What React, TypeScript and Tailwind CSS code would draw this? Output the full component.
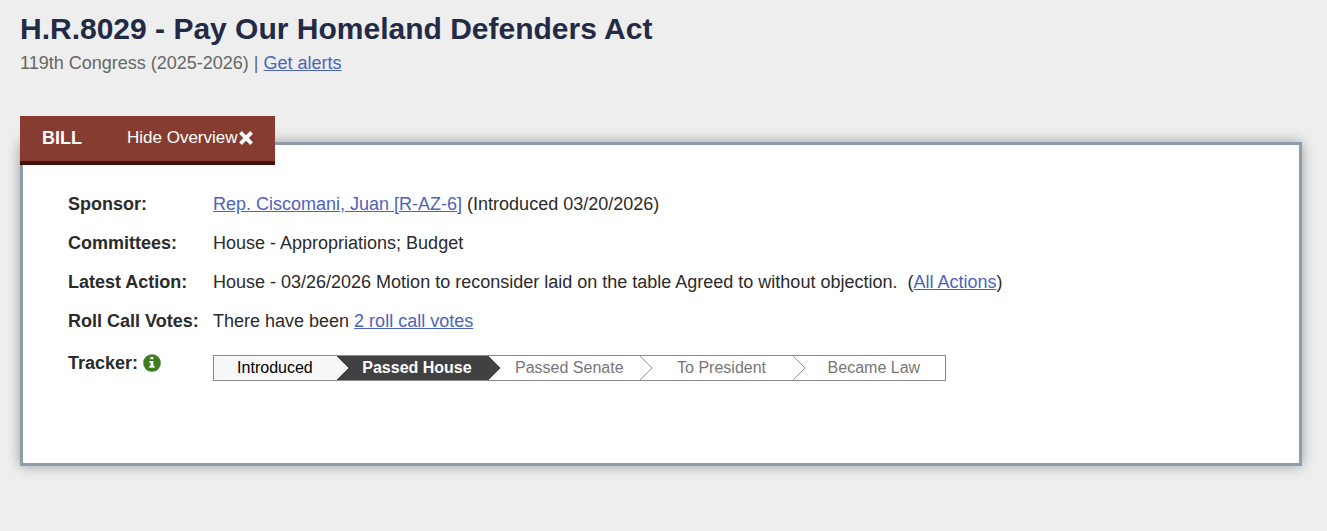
import React from 'react';

const steps = ['Introduced', 'Passed House', 'Passed Senate', 'To President', 'Became Law'];
const currentStep = 1;

const linkClass = 'text-[#4c63bd] underline hover:no-underline';

interface RowProps {
    label: string;
    children: React.ReactNode;
}

const Row: React.FC<RowProps> = ({ label, children }) => (
    <tr>
        <th scope="row" className="w-[145px] pb-[15px] text-left align-top font-bold whitespace-nowrap">{label}</th>
        <td className="pb-[15px] align-top">{children}</td>
    </tr>
);

const CloseIcon: React.FC = () => (
    <svg viewBox="0 0 14 14" className="size-[14px]" aria-hidden="true">
        <path d="M2.8 2.8 11.2 11.2M11.2 2.8 2.8 11.2" fill="none" stroke="currentColor" strokeWidth="3.8" strokeLinecap="square" />
    </svg>
);

const InfoIcon: React.FC = () => (
    <svg viewBox="0 0 18 18" className="size-[18px]" aria-hidden="true">
        <circle cx="9" cy="9" r="8.8" fill="currentColor" />
        <path d="M7.4 3h3v2.3h-3zM6.4 7h4v4.8h1.2v2H6.4v-2h1.2V9H6.4z" fill="#fff" />
    </svg>
);

const stepStyle = (idx: number) => {
    if (idx < currentStep) return 'bg-[#f7f7f7] text-black';
    if (idx === currentStep) return 'bg-[#414141] pl-[10px] font-bold text-white';
    return 'bg-white pl-[10px] text-[#777]';
};

const arrowStyle = (idx: number) => {
    if (idx < currentStep) return 'fill-[#f7f7f7] stroke-[#f7f7f7]';
    if (idx === currentStep) return 'fill-[#414141] stroke-[#414141]';
    return 'fill-white stroke-[#999]';
};

const Tracker: React.FC = () => (
    <ol className="mt-[7px] grid max-w-[733px] grid-cols-[4fr_5fr_5fr_5fr_5fr] border border-[#888] text-base leading-6">
        {steps.map((step, idx) => (
            <li key={step} className={`relative text-center whitespace-nowrap ${stepStyle(idx)}`}>
                {step}
                {idx < steps.length - 1 && (
                    <svg viewBox="0 0 13 24" className={`absolute top-0 left-full z-10 h-6 w-[13px] ${arrowStyle(idx)}`} aria-hidden="true">
                        <path d="M0 0 12 12 0 24" />
                    </svg>
                )}
            </li>
        ))}
    </ol>
);

export default function App() {
    return (
        <div className="min-h-screen bg-[#eee] pr-[25px] pl-5 font-['Liberation_Sans',Arial,sans-serif] text-[18px] leading-6 text-[#2b2b2b]">
            <header className="pt-[11px]">
                <h1 className="text-[30px] leading-9 font-bold text-[#232a45]">H.R.8029 - Pay Our Homeland Defenders Act</h1>
                <p className="mt-1 text-[#666]">
                    119th Congress (2025-2026) | <a href="#alerts" className={linkClass}>Get alerts</a>
                </p>
            </header>

            <main className="mt-[41px]">
                {/* Tab sits over the top edge of the overview box */}
                <div className="relative z-10 flex w-fit items-center gap-[45px] border-b-4 border-[#441111] bg-[#873c31] px-[22px] pt-[10px] pb-[11px] text-white">
                    <h2 className="font-bold">BILL</h2>
                    <button type="button" className="flex cursor-pointer items-center gap-px text-[17px] leading-6">
                        Hide Overview
                        <CloseIcon />
                    </button>
                </div>

                <section className="-mt-[23px] border-3 border-[#8e9dab] bg-white px-[45px] pt-[47px] pb-[67px] shadow-[0_0_12px_rgba(0,0,0,0.35)]">
                    <table className="w-full">
                        <tbody>
                            <Row label="Sponsor:">
                                <a href="#sponsor" className={linkClass}>Rep. Ciscomani, Juan [R-AZ-6]</a> (Introduced 03/20/2026)
                            </Row>
                            <Row label="Committees:">House - Appropriations; Budget</Row>
                            <Row label="Latest Action:">
                                House - 03/26/2026 Motion to reconsider laid on the table Agreed to without objection.&nbsp; (<a href="#actions" className={linkClass}>All Actions</a>)
                            </Row>
                            <Row label="Roll Call Votes:">
                                There have been <a href="#votes" className={linkClass}>2 roll call votes</a>
                            </Row>
                            <tr>
                                <th scope="row" className="pt-[3px] text-left align-top font-bold">
                                    <span className="flex items-center gap-[5px]">
                                        Tracker:
                                        <button type="button" aria-label="Tracker help" className="cursor-pointer text-[#3b7d1f]">
                                            <InfoIcon />
                                        </button>
                                    </span>
                                </th>
                                <td className="pb-[15px] align-top">
                                    <Tracker />
                                </td>
                            </tr>
                        </tbody>
                    </table>
                </section>
            </main>
        </div>
    );
}
